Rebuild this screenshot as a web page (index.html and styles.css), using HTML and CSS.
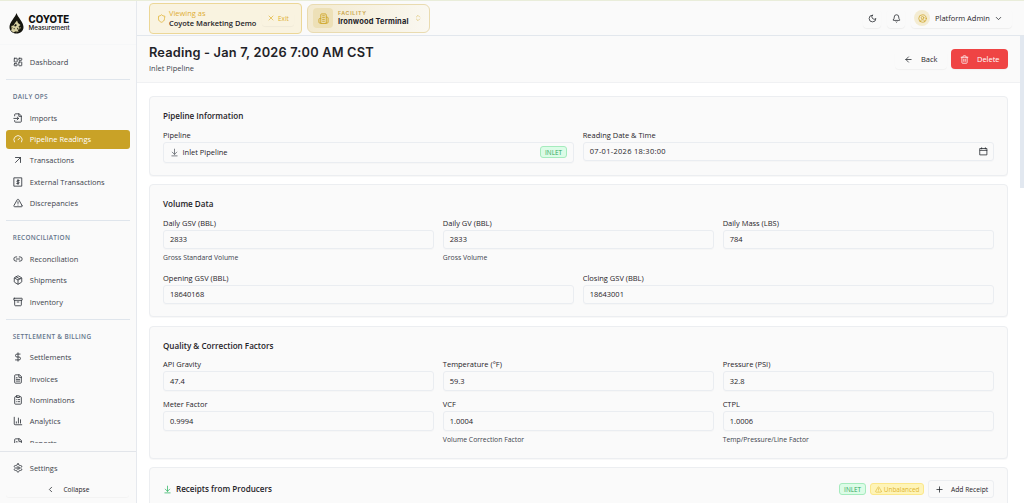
FILE: index.html
```
<!DOCTYPE html>
<html lang="en">
<head>
    <meta charset="UTF-8">
    <meta name="viewport" content="width=device-width, initial-scale=1.0">
    <title>Reading - Coyote Measurement</title>
    <link rel="stylesheet" href="styles.css">
</head>
<body>
    <!-- Icon set -->
    <svg class="sprite">
        <symbol id="dashboard" viewBox="0 0 24 24"><rect x="3" y="3" width="7" height="9" rx="1"/><rect x="14" y="3" width="7" height="5" rx="1"/><rect x="14" y="12" width="7" height="9" rx="1"/><rect x="3" y="16" width="7" height="5" rx="1"/></symbol>
        <symbol id="import" viewBox="0 0 24 24"><path d="M4 7V4a2 2 0 0 1 2-2h9l5 5v13a2 2 0 0 1-2 2H6a2 2 0 0 1-2-2v-2"/><path d="M14 2v6h6M2 13h11M10 9.500l3.500 3.500-3.500 3.500"/></symbol>
        <symbol id="gauge" viewBox="0 0 24 24"><path d="m12 14 4-4M3.340 19a10 10 0 1 1 17.320 0"/></symbol>
        <symbol id="arrow-up-right" viewBox="0 0 24 24"><path d="M6 6h12v12M6 18 18 6"/></symbol>
        <symbol id="receipt" viewBox="0 0 24 24"><path d="M3 2h18v20H3z"/><path d="M15 8.500h-4a1.750 1.750 0 0 0 0 3.500h2a1.750 1.750 0 0 1 0 3.500H9M12 6v12"/></symbol>
        <symbol id="alert" viewBox="0 0 24 24"><path d="m21.730 18-8-14a2 2 0 0 0-3.480 0l-8 14A2 2 0 0 0 4 21h16a2 2 0 0 0 1.730-3M12 9v4M12 17h.01"/></symbol>
        <symbol id="link" viewBox="0 0 24 24"><path d="M9 17H7A5 5 0 0 1 7 7h2M15 7h2a5 5 0 1 1 0 10h-2M8 12h8"/></symbol>
        <symbol id="package" viewBox="0 0 24 24"><path d="M11 21.730a2 2 0 0 0 2 0l7-4A2 2 0 0 0 21 16V8a2 2 0 0 0-1-1.730l-7-4a2 2 0 0 0-2 0l-7 4A2 2 0 0 0 3 8v8a2 2 0 0 0 1 1.730zM12 22V12M3.300 7 12 12l8.700-5M7.500 4.270l9 5.150"/></symbol>
        <symbol id="archive" viewBox="0 0 24 24"><rect x="2" y="3" width="20" height="5" rx="1"/><path d="M4 8v11a2 2 0 0 0 2 2h12a2 2 0 0 0 2-2V8M10 12h4"/></symbol>
        <symbol id="dollar" viewBox="0 0 24 24"><path d="M12 2v20M17 5H9.500a3.500 3.500 0 0 0 0 7h5a3.500 3.500 0 0 1 0 7H6"/></symbol>
        <symbol id="file" viewBox="0 0 24 24"><path d="M15 2H6a2 2 0 0 0-2 2v16a2 2 0 0 0 2 2h12a2 2 0 0 0 2-2V7zM14 2v6h6M10 9H8M16 13H8M16 17H8"/></symbol>
        <symbol id="clipboard" viewBox="0 0 24 24"><rect x="8" y="2" width="8" height="4" rx="1"/><path d="M16 4h2a2 2 0 0 1 2 2v14a2 2 0 0 1-2 2H6a2 2 0 0 1-2-2V6a2 2 0 0 1 2-2h2M12 11h4M12 16h4M8 11h.01M8 16h.01"/></symbol>
        <symbol id="chart" viewBox="0 0 24 24"><path d="M3 3v16a2 2 0 0 0 2 2h16M18 17V9M13 17V5M8 17v-3"/></symbol>
        <symbol id="settings" viewBox="0 0 24 24"><path d="M12.200 2h-.4a2 2 0 0 0-2 2v.2a2 2 0 0 1-1 1.700l-.4.3a2 2 0 0 1-2 0l-.2-.1a2 2 0 0 0-2.700.7l-.2.4a2 2 0 0 0 .7 2.700l.2.100a2 2 0 0 1 1 1.700v.6a2 2 0 0 1-1 1.700l-.2.100a2 2 0 0 0-.7 2.700l.2.4a2 2 0 0 0 2.700.7l.2-.1a2 2 0 0 1 2 0l.4.3a2 2 0 0 1 1 1.700v.2a2 2 0 0 0 2 2h.4a2 2 0 0 0 2-2v-.2a2 2 0 0 1 1-1.700l.4-.3a2 2 0 0 1 2 0l.2.100a2 2 0 0 0 2.700-.7l.2-.4a2 2 0 0 0-.7-2.700l-.2-.1a2 2 0 0 1-1-1.700v-.6a2 2 0 0 1 1-1.700l.2-.1a2 2 0 0 0 .7-2.700l-.2-.4a2 2 0 0 0-2.700-.7l-.2.100a2 2 0 0 1-2 0l-.4-.3a2 2 0 0 1-1-1.700V4a2 2 0 0 0-2-2z"/><circle cx="12" cy="12" r="3"/></symbol>
        <symbol id="chevron-left" viewBox="0 0 24 24"><path d="m15 18-6-6 6-6"/></symbol>
        <symbol id="chevron-down" viewBox="0 0 24 24"><path d="m6 9 6 6 6-6"/></symbol>
        <symbol id="chevrons" viewBox="0 0 24 24"><path d="m7 15 5 5 5-5M7 9l5-5 5 5"/></symbol>
        <symbol id="shield" viewBox="0 0 24 24"><path d="M20 13c0 5-3.500 7.500-8 9-4.500-1.500-8-4-8-9V6c3 0 6-2 8-4 2 2 5 4 8 4z"/></symbol>
        <symbol id="x" viewBox="0 0 24 24"><path d="M18 6 6 18M6 6l12 12"/></symbol>
        <symbol id="building" viewBox="0 0 24 24"><path d="M6 22V4a2 2 0 0 1 2-2h8a2 2 0 0 1 2 2v18zM6 12H4a2 2 0 0 0-2 2v6a2 2 0 0 0 2 2h2M18 9h2a2 2 0 0 1 2 2v9a2 2 0 0 1-2 2h-2M10 6h4M10 10h4M10 14h4M10 18h4"/></symbol>
        <symbol id="moon" viewBox="0 0 24 24"><path d="M12 3a6 6 0 0 0 9 9 9 9 0 1 1-9-9"/></symbol>
        <symbol id="bell" viewBox="0 0 24 24"><path d="M10.300 21a2 2 0 0 0 3.400 0M3.300 15.300A1 1 0 0 0 4 17h16a1 1 0 0 0 .7-1.700C19.400 14 18 12.500 18 8A6 6 0 0 0 6 8c0 4.500-1.400 6-2.700 7.300"/></symbol>
        <symbol id="user" viewBox="0 0 24 24"><circle cx="12" cy="12" r="10"/><circle cx="12" cy="10" r="3.500"/><path d="M6 20c0-3 2-4.500 6-4.500s6 1.500 6 4.500"/></symbol>
        <symbol id="arrow-left" viewBox="0 0 24 24"><path d="m12 19-7-7 7-7M19 12H5"/></symbol>
        <symbol id="trash" viewBox="0 0 24 24"><path d="M3 6h18M19 6v14a2 2 0 0 1-2 2H7a2 2 0 0 1-2-2V6M8 6V4a2 2 0 0 1 2-2h4a2 2 0 0 1 2 2v2M10 11v6M14 11v6"/></symbol>
        <symbol id="download" viewBox="0 0 24 24"><path d="M12 17V3M6 11l6 6 6-6M5 21h14"/></symbol>
        <symbol id="calendar" viewBox="0 0 24 24"><path d="M3 4h18v17H3zM3 9h18M7 2v3M17 2v3"/></symbol>
        <symbol id="plus" viewBox="0 0 24 24"><path d="M5 12h14M12 5v14"/></symbol>
    </svg>

    <div class="app">
        <aside class="sidebar">
            <div class="brand">
                <svg class="brand-mark" viewBox="0 0 30 42">
                    <path fill="#15150f" d="M15 0C13 8 1 18 1 28c0 8 6 13 14 13s14-5 14-13C29 18 17 8 15 0z"/>
                    <path fill="#d8d1a4" d="m12 20 4-5 2 5 5 4-4 3 2 4-3 3 1 4-5-2-5 3-5-4 3-6-3-3 5-1z"/>
                    <path fill="#15150f" d="m13 22 3 2-3 3-3-1zM17 29l2 3-3 1zM9 30l3 1-2 2z"/>
                    <path fill="#8d875c" d="m4 26 3 2-2 5zM21 27l3 2-3 5zM11 37l6-1-1 3z"/>
                </svg>
                <div class="brand-text">
                    <div class="brand-name">COYOTE</div>
                    <div class="brand-sub">Measurement</div>
                </div>
            </div>

            <nav class="nav">
                <a class="nav-item"><svg class="icon"><use href="#dashboard"/></svg>Dashboard</a>
                <div class="nav-section">DAILY OPS</div>
                <a class="nav-item"><svg class="icon"><use href="#import"/></svg>Imports</a>
                <a class="nav-item active"><svg class="icon"><use href="#gauge"/></svg>Pipeline Readings</a>
                <a class="nav-item"><svg class="icon"><use href="#arrow-up-right"/></svg>Transactions</a>
                <a class="nav-item"><svg class="icon"><use href="#receipt"/></svg>External Transactions</a>
                <a class="nav-item"><svg class="icon"><use href="#alert"/></svg>Discrepancies</a>
                <div class="nav-section">RECONCILIATION</div>
                <a class="nav-item"><svg class="icon"><use href="#link"/></svg>Reconciliation</a>
                <a class="nav-item"><svg class="icon"><use href="#package"/></svg>Shipments</a>
                <a class="nav-item"><svg class="icon"><use href="#archive"/></svg>Inventory</a>
                <div class="nav-section">SETTLEMENT &amp; BILLING</div>
                <a class="nav-item"><svg class="icon"><use href="#dollar"/></svg>Settlements</a>
                <a class="nav-item"><svg class="icon"><use href="#file"/></svg>Invoices</a>
                <a class="nav-item"><svg class="icon"><use href="#clipboard"/></svg>Nominations</a>
                <a class="nav-item"><svg class="icon"><use href="#chart"/></svg>Analytics</a>
                <a class="nav-item"><svg class="icon"><use href="#file"/></svg>Reports</a>
            </nav>

            <div class="sidebar-footer">
                <a class="nav-item"><svg class="icon"><use href="#settings"/></svg>Settings</a>
                <button class="collapse"><svg class="icon"><use href="#chevron-left"/></svg>Collapse</button>
            </div>
        </aside>

        <div class="main">
            <header class="topbar">
                <div class="viewing">
                    <svg class="icon"><use href="#shield"/></svg>
                    <div>
                        <div class="viewing-label">Viewing as</div>
                        <div class="viewing-name">Coyote Marketing Demo</div>
                    </div>
                    <button class="exit"><svg class="icon"><use href="#x"/></svg>Exit</button>
                </div>
                <div class="facility">
                    <div class="facility-icon"><svg class="icon"><use href="#building"/></svg></div>
                    <div>
                        <div class="facility-label">FACILITY</div>
                        <div class="facility-name">Ironwood Terminal</div>
                    </div>
                    <svg class="icon chevrons"><use href="#chevrons"/></svg>
                </div>
                <div class="topbar-right">
                    <button class="icon-btn"><svg class="icon"><use href="#moon"/></svg></button>
                    <button class="icon-btn"><svg class="icon"><use href="#bell"/></svg></button>
                    <button class="user-btn">
                        <span class="avatar"><svg class="icon"><use href="#user"/></svg></span>
                        <span class="user-name">Platform Admin</span>
                        <svg class="icon"><use href="#chevron-down"/></svg>
                    </button>
                </div>
            </header>

            <div class="page-header">
                <div>
                    <h1>Reading - Jan 7, 2026 7:00 AM CST</h1>
                    <p>Inlet Pipeline</p>
                </div>
                <div class="actions">
                    <button class="btn"><svg class="icon"><use href="#arrow-left"/></svg>Back</button>
                    <button class="btn delete"><svg class="icon"><use href="#trash"/></svg>Delete</button>
                </div>
            </div>

            <div class="content">
                <section class="card">
                    <h2>Pipeline Information</h2>
                    <div class="grid two">
                        <div class="field">
                            <label>Pipeline</label>
                            <div class="input pipeline"><svg class="icon"><use href="#download"/></svg>Inlet Pipeline<span class="badge inlet">INLET</span></div>
                        </div>
                        <div class="field">
                            <label>Reading Date &amp; Time</label>
                            <div class="input date">07-01-2026 18:30:00<svg class="icon"><use href="#calendar"/></svg></div>
                        </div>
                    </div>
                </section>

                <section class="card">
                    <h2>Volume Data</h2>
                    <div class="grid three">
                        <div class="field"><label>Daily GSV (BBL)</label><div class="input">2833</div><p class="help">Gross Standard Volume</p></div>
                        <div class="field"><label>Daily GV (BBL)</label><div class="input">2833</div><p class="help">Gross Volume</p></div>
                        <div class="field"><label>Daily Mass (LBS)</label><div class="input">784</div></div>
                    </div>
                    <div class="grid two">
                        <div class="field"><label>Opening GSV (BBL)</label><div class="input">18640168</div></div>
                        <div class="field"><label>Closing GSV (BBL)</label><div class="input">18643001</div></div>
                    </div>
                </section>

                <section class="card">
                    <h2>Quality &amp; Correction Factors</h2>
                    <div class="grid three">
                        <div class="field"><label>API Gravity</label><div class="input">47.4</div></div>
                        <div class="field"><label>Temperature (°F)</label><div class="input">59.3</div></div>
                        <div class="field"><label>Pressure (PSI)</label><div class="input">32.8</div></div>
                        <div class="field"><label>Meter Factor</label><div class="input">0.9994</div></div>
                        <div class="field"><label>VCF</label><div class="input">1.0004</div><p class="help">Volume Correction Factor</p></div>
                        <div class="field"><label>CTPL</label><div class="input">1.0006</div><p class="help">Temp/Pressure/Line Factor</p></div>
                    </div>
                </section>

                <section class="card receipts">
                    <div class="receipts-head">
                        <svg class="icon"><use href="#download"/></svg>
                        <h2>Receipts from Producers</h2>
                        <span class="badge inlet">INLET</span>
                        <span class="badge warn"><svg class="icon"><use href="#alert"/></svg>Unbalanced</span>
                        <button class="add-btn"><svg class="icon"><use href="#plus"/></svg>Add Receipt</button>
                    </div>
                </section>
            </div>
            <div class="scroll-thumb"></div>
        </div>
    </div>
</body>
</html>
```
FILE: styles.css
```
* {
    box-sizing: border-box;
}

body {
    margin: 0;
    height: 503px;
    overflow: hidden;
    background: #fff;
    color: #1f2328;
    font-family: "Open Sans", "Noto Sans", sans-serif;
    font-size: 7.470px;
    white-space: nowrap;
}

h1, h2, p {
    margin: 0;
}

button {
    font: inherit;
    color: inherit;
    border: none;
    background: none;
    padding: 0;
    display: flex;
    align-items: center;
}

.sprite {
    display: none;
}

.icon {
    width: 9px;
    height: 9px;
    flex: none;
    fill: none;
    stroke: currentColor;
    stroke-width: 2;
    stroke-linecap: round;
    stroke-linejoin: round;
}

.app {
    display: flex;
    height: 503px;
    border-top: 1px solid #e9edda;
}

/* Sidebar */
.sidebar {
    width: 137px;
    flex: none;
    display: flex;
    flex-direction: column;
    background: #fafafa;
    border-right: 1px solid #e6e9ee;
}

.brand {
    height: 44px;
    flex: none;
    display: flex;
    align-items: center;
    gap: 5px;
    padding: 1px 0 0 8.500px;
    border-bottom: 1px solid #f6f7f8;
}

.brand-mark {
    width: 15px;
    height: 21px;
}

.brand-text {
    font-family: Inter, sans-serif;
    color: #111;
}

.brand-name {
    font-size: 9.700px;
    font-weight: 800;
    line-height: 9px;
}

.brand-sub {
    font-size: 6.250px;
    font-weight: 500;
    line-height: 8px;
}

.nav {
    height: 398px;
    flex: none;
    overflow: hidden;
    padding: 7.400px 6.400px 0;
}

.nav-item {
    display: flex;
    align-items: center;
    gap: 6.400px;
    height: 19.200px;
    margin-bottom: 2.130px;
    padding-left: 7px;
    border-radius: 3px;
    color: #3c434c;
}

.nav-item .icon {
    width: 10px;
    height: 10px;
    color: #2c3138;
}

.nav-item.active {
    background: #c9a227;
    color: #fff;
}

.nav-item.active .icon {
    color: #fff;
}

.nav-section {
    height: 29.100px;
    margin-top: 7.600px;
    padding: 11px 0 0 6.400px;
    border-top: 1px solid #dfe5ec;
    color: #64748b;
    font-size: 6.400px;
    font-weight: 600;
    line-height: 12px;
    letter-spacing: 0.320px;
}

.sidebar-footer {
    height: 53px;
    margin-top: 8px;
    padding: 6px 6.400px 0;
    border-top: 1px solid #e2e5ea;
}

.collapse {
    width: 123px;
    height: 15px;
    margin-top: 5px;
    padding-left: 40px;
    gap: 8px;
    border-radius: 3px;
    font-size: 6.600px;
    box-shadow: 0 1px 1px rgba(0, 0, 0, 0.03);
}

/* Top bar */
.main {
    position: relative;
    flex: 1;
    display: flex;
    flex-direction: column;
    min-width: 0;
}

.topbar {
    height: 35px;
    flex: none;
    display: flex;
    align-items: center;
    gap: 4.500px;
    padding: 0 12px;
    background: #fafafa;
    border-bottom: 1px solid #e2e7ed;
}

.viewing {
    width: 153px;
    height: 31px;
    display: flex;
    align-items: center;
    gap: 3.500px;
    padding: 0 7px 0 6.500px;
    border: 1px solid #ecd797;
    border-radius: 4px;
    background: #f9f3e0;
}

.viewing > .icon {
    color: #dfb02f;
}

.viewing-label {
    color: #e0ad35;
    line-height: 10px;
}

.viewing-name {
    font-weight: 600;
    line-height: 11px;
}

.exit {
    width: 32px;
    height: 15px;
    margin-left: auto;
    padding-left: 5px;
    gap: 3px;
    border-radius: 3px;
    color: #dfb02f;
    font-size: 6.400px;
    box-shadow: 0 1px 1px rgba(0, 0, 0, 0.04);
}

.exit .icon {
    width: 8px;
    height: 8px;
}

.facility {
    width: 123px;
    height: 29px;
    display: flex;
    align-items: center;
    gap: 5px;
    padding: 0 6px 0 5.500px;
    border: 1px solid #e9dbb0;
    border-radius: 6px;
    background: linear-gradient(90deg, #f3ead0, #faf8f1);
    font-family: Inter, sans-serif;
}

.facility-icon {
    width: 20px;
    height: 20px;
    display: flex;
    align-items: center;
    justify-content: center;
    border-radius: 4px;
    background: #ede0b7;
    color: #cfa62b;
}

.facility-icon .icon {
    width: 11px;
    height: 11px;
}

.facility-label {
    color: #c9a54a;
    font-size: 5.300px;
    font-weight: 600;
    line-height: 8px;
    letter-spacing: 0.650px;
}

.facility-name {
    font-size: 7.470px;
    font-weight: 700;
    line-height: 10px;
    letter-spacing: 0.160px;
}

.chevrons {
    width: 8px;
    height: 8px;
    color: #dcbf66;
}

.topbar-right {
    display: flex;
    gap: 6px;
    margin-left: auto;
}

.icon-btn,
.user-btn {
    height: 19px;
    border-radius: 4px;
    box-shadow: 0 1px 1px rgba(0, 0, 0, 0.05);
}

.icon-btn {
    width: 18px;
    justify-content: center;
}

.user-btn {
    width: 101px;
    padding-left: 3px;
    gap: 5px;
}

.user-btn > .icon {
    margin-left: -4px;
}

.user-name {
    width: 58px;
    text-align: left;
}

.avatar {
    width: 16px;
    height: 16px;
    display: flex;
    align-items: center;
    justify-content: center;
    border-radius: 50%;
    background: #f4ecd2;
    color: #cfa62b;
}

/* Page header */
.page-header {
    height: 47px;
    flex: none;
    display: flex;
    justify-content: space-between;
    padding: 0 16px 0 12px;
    background: #fafafa;
    border-bottom: 1px solid #f0f1f3;
}

.page-header h1 {
    padding-top: 7px;
    font-family: Inter, sans-serif;
    font-size: 12.800px;
    font-weight: 600;
    line-height: 19px;
    letter-spacing: 0.180px;
}

.page-header p {
    color: #3d444d;
    line-height: 12px;
}

.actions {
    display: flex;
    gap: 4px;
    padding-top: 13px;
}

.btn {
    height: 20px;
    width: 52px;
    padding-left: 9px;
    gap: 8px;
    border-radius: 4px;
    box-shadow: 0 1px 1px rgba(0, 0, 0, 0.04);
}

.btn.delete {
    width: 57px;
    background: #ef4444;
    color: #fff;
}

/* Cards */
.content {
    flex: 1;
    overflow: hidden;
    padding: 13px 16px 0 12px;
}

.card {
    margin-bottom: 8.500px;
    padding: 13px 13px 12px;
    background: #fafafa;
    border: 1px solid #eceef1;
    border-radius: 4px;
    box-shadow: 0 1px 1px rgba(0, 0, 0, 0.03);
}

.card h2 {
    margin-bottom: 7.500px;
    font-size: 8.100px;
    font-weight: 600;
    line-height: 12px;
}

.grid {
    display: grid;
    gap: 8.500px;
}

.grid.two {
    grid-template-columns: 1fr 1fr;
}

.grid.three {
    grid-template-columns: 1fr 1fr 1fr;
}

.grid + .grid {
    margin-top: 8.500px;
}

.field label {
    display: block;
    height: 12px;
    line-height: 10.800px;
}

.input {
    height: 19.500px;
    display: flex;
    align-items: center;
    padding: 0 6px;
    border: 1px solid #eaedf1;
    border-radius: 3px;
    box-shadow: 0 1px 1px rgba(0, 0, 0, 0.02);
}

.input.pipeline {
    height: 21px;
    gap: 3.500px;
}

.input.pipeline > .icon {
    color: #555b63;
}

.input.date {
    padding-right: 5px;
    letter-spacing: 0.300px;
}

.input.date .icon {
    margin-left: auto;
}

.help {
    margin-top: 3px;
    font-size: 6.830px;
    line-height: 12px;
    color: #3d444d;
}

.badge {
    height: 12px;
    display: flex;
    align-items: center;
    padding: 0 4.200px;
    border: 1px solid;
    border-radius: 3px;
    font-size: 6.400px;
}

.badge.inlet {
    background: #dcfce7;
    border-color: #a5ebbd;
    color: #2fa55c;
}

.pipeline .badge {
    margin-left: auto;
}

.badge.warn {
    gap: 2px;
    padding: 0 3.500px;
    background: #fef4b8;
    border-color: #fbe78a;
    color: #dfb52c;
}

.badge.warn .icon {
    width: 7px;
    height: 7px;
}

.receipts {
    height: 60px;
    padding-top: 12px;
}

.receipts-head {
    display: flex;
    align-items: center;
    gap: 4px;
}

.receipts-head > .icon {
    color: #2fb463;
}

.receipts-head h2 {
    margin: 0 auto 0 0;
}

.add-btn {
    width: 66px;
    height: 18px;
    padding-left: 6px;
    gap: 7px;
    border: 1px solid #eceef1;
    border-radius: 3px;
    font-size: 6.700px;
}

.scroll-thumb {
    position: absolute;
    top: 35px;
    right: 0;
    width: 4px;
    height: 152px;
    background: #e2e8f0;
}
```
